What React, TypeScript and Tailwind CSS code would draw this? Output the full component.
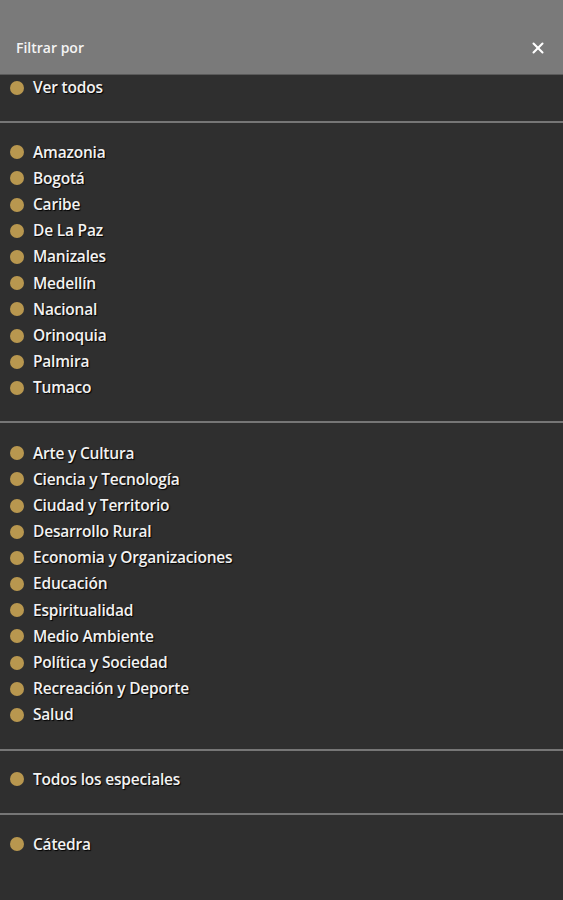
import { X } from "lucide-react";

const sections: { items: string[]; pad: string }[] = [
  { items: ["Ver todos"], pad: "pb-5" },
  {
    items: [
      "Amazonia",
      "Bogotá",
      "Caribe",
      "De La Paz",
      "Manizales",
      "Medellín",
      "Nacional",
      "Orinoquia",
      "Palmira",
      "Tumaco",
    ],
    pad: "pt-4 pb-5",
  },
  {
    items: [
      "Arte y Cultura",
      "Ciencia y Tecnología",
      "Ciudad y Territorio",
      "Desarrollo Rural",
      "Economia y Organizaciones",
      "Educación",
      "Espiritualidad",
      "Medio Ambiente",
      "Política y Sociedad",
      "Recreación y Deporte",
      "Salud",
    ],
    pad: "pt-[17px] pb-[21px]",
  },
  { items: ["Todos los especiales"], pad: "pt-[15px] pb-[21px]" },
  { items: ["Cátedra"], pad: "pt-4 pb-5" },
];

function FilterItem({ label }: { label: string }) {
  return (
    <li className="flex h-[26.2px] items-center">
      <span className="ml-[10px] h-[14px] w-[14px] shrink-0 rounded-full bg-[#b8974f]" />
      <span className="ml-[9px] text-[15.5px] font-semibold tracking-[-0.2px] text-[#f2f2f2] [text-shadow:1px_1px_1px_#000]">
        {label}
      </span>
    </li>
  );
}

export default function App() {
  return (
    <div className="flex h-[900px] w-full flex-col bg-[#2f2f2f] font-['Open_Sans',sans-serif]">
      <header className="flex h-[75px] shrink-0 items-end justify-between border-b border-[#5a5a5a] bg-[#7a7a7a] pb-4 pl-4 pr-[16px]">
        <h1 className="text-[14px] font-semibold text-[#f4f4f4]">Filtrar por</h1>
        <X className="mb-[1px] h-[18px] w-[18px] text-white" strokeWidth={2.75} />
      </header>
      {sections.map((s, i) => (
        <div key={i}>
          {i > 0 && <div className="h-[2px] bg-[#767676]" />}
          <ul className={s.pad}>
            {s.items.map((label) => (
              <FilterItem key={label} label={label} />
            ))}
          </ul>
        </div>
      ))}
    </div>
  );
}
